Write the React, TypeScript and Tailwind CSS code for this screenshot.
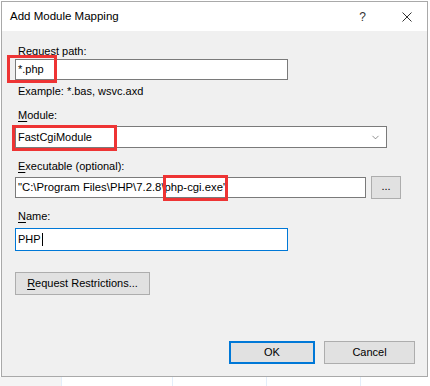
import { ChevronDown } from 'lucide-react';

const font = { fontFamily: '"Liberation Sans", Arial, sans-serif' };

function Label({ k, rest, className = '' }: { k: string; rest: string; className?: string }) {
  return (
    <div className={`pl-[3px] text-[11px] leading-[15px] text-black ${className}`}>
      <span className="underline underline-offset-2">{k}</span>
      {rest}
    </div>
  );
}

function TextBox({ value, className = '', focused = false, caret = false }: { value: string; className?: string; focused?: boolean; caret?: boolean }) {
  return (
    <div
      className={`flex items-center bg-white pl-[2px] leading-[13px] text-black border ${
        focused ? 'border-[#0078d7]' : 'border-[#7a7a7a]'
      } ${className}`}
    >
      <span className="whitespace-pre">{value}</span>
      {caret && <span className="ml-px h-[13px] w-px bg-black" />}
    </div>
  );
}

function WinButton({ children, className = '', primary = false }: { children: React.ReactNode; className?: string; primary?: boolean }) {
  return (
    <div
      className={`flex h-[23px] items-center justify-center bg-[#e1e1e1] text-[11px] text-black border ${
        primary ? 'border-[#0078d7] shadow-[inset_0_0_0_1px_#0078d7]' : 'border-[#adadad]'
      } ${className}`}
    >
      {children}
    </div>
  );
}

export default function App() {
  return (
    <div className="relative h-[386px] w-[430px] overflow-hidden bg-white" style={font}>
      {/* dialog window */}
      <div className="ml-px mt-px flex h-[376px] w-[427px] flex-col border border-[#a9a9a9] bg-[#f0f0f0]">
        <div className="flex h-[29px] shrink-0 items-center bg-white pl-[8px] pr-[15px]">
          <span className="text-[11.5px] text-black">Add Module Mapping</span>
          <span className="ml-auto mr-[36px] text-[12px] text-[#333]">?</span>
          <svg width="10" height="10" viewBox="0 0 10 10" className="mt-px">
            <path d="M0.5 0.5 L9.5 9.5 M9.5 0.5 L0.5 9.5" stroke="#333" strokeWidth="1" fill="none" />
          </svg>
        </div>

        <div className="flex flex-1 flex-col pl-[13px] pr-[12px] pt-[13px]">
          <Label k="R" rest="equest path:" />
          <TextBox value="*.php" className="h-[21px] w-[273px] text-[11px]" />
          <div className="mt-[4px] pl-[3px] text-[11px] leading-[15px] text-black">Example: *.bas, wsvc.axd</div>

          <Label k="M" rest="odule:" className="mt-[9px]" />
          <div className="mt-[3px] flex h-[22px] w-[372px] items-center justify-between border border-[#7a7a7a] bg-white pl-[2px] pr-[5px] text-[11px] text-black">
            <span>FastCgiModule</span>
            <ChevronDown size={11} strokeWidth={1.4} color="#555" />
          </div>

          <Label k="E" rest="xecutable (optional):" className="mt-[11px]" />
          <div className="mt-[2px] flex h-[23px] items-start">
            <TextBox value={'"C:\\Program Files\\PHP\\7.2.8\\php-cgi.exe"'} className="mt-px h-[21px] w-[351px] text-[11.3px]" />
            <WinButton className="ml-[5px] w-[30px]">
              <span className="-mt-[3px]">...</span>
            </WinButton>
          </div>

          <Label k="N" rest="ame:" className="mt-[10px]" />
          <TextBox value="PHP" focused caret className="mt-[4px] h-[23px] w-[273px] text-[11px]" />

          <WinButton className="mt-[21px] w-[135px]">
            <span>
              <span className="underline underline-offset-2">R</span>equest Restrictions...
            </span>
          </WinButton>

          <div className="mt-[46px] flex justify-end gap-[9px]">
            <WinButton primary className="w-[86px]">OK</WinButton>
            <WinButton className="w-[91px]">Cancel</WinButton>
          </div>
        </div>
      </div>

      {/* background grid peeking below the dialog */}
      <div className="flex h-[9px]">
        <div className="w-[61px] bg-[#f4f4f4]" />
        <div className="w-[111px] border-l border-[#e3eefa]" />
        <div className="w-[94px] border-l border-[#e3eefa]" />
        <div className="w-[94px] border-l border-[#e3eefa]" />
        <div className="flex-1 border-l border-[#e3eefa]" />
      </div>

      {/* red annotation boxes */}
      <div className="absolute left-[7px] top-[55px] h-[28px] w-[50px] border-[3px] border-[#ee3434]" />
      <div className="absolute left-[12px] top-[125px] h-[26px] w-[105px] border-[3px] border-[#ee3434]" />
      <div className="absolute left-[163px] top-[175px] h-[26px] w-[65px] border-[3px] border-[#ee3434]" />
    </div>
  );
}
